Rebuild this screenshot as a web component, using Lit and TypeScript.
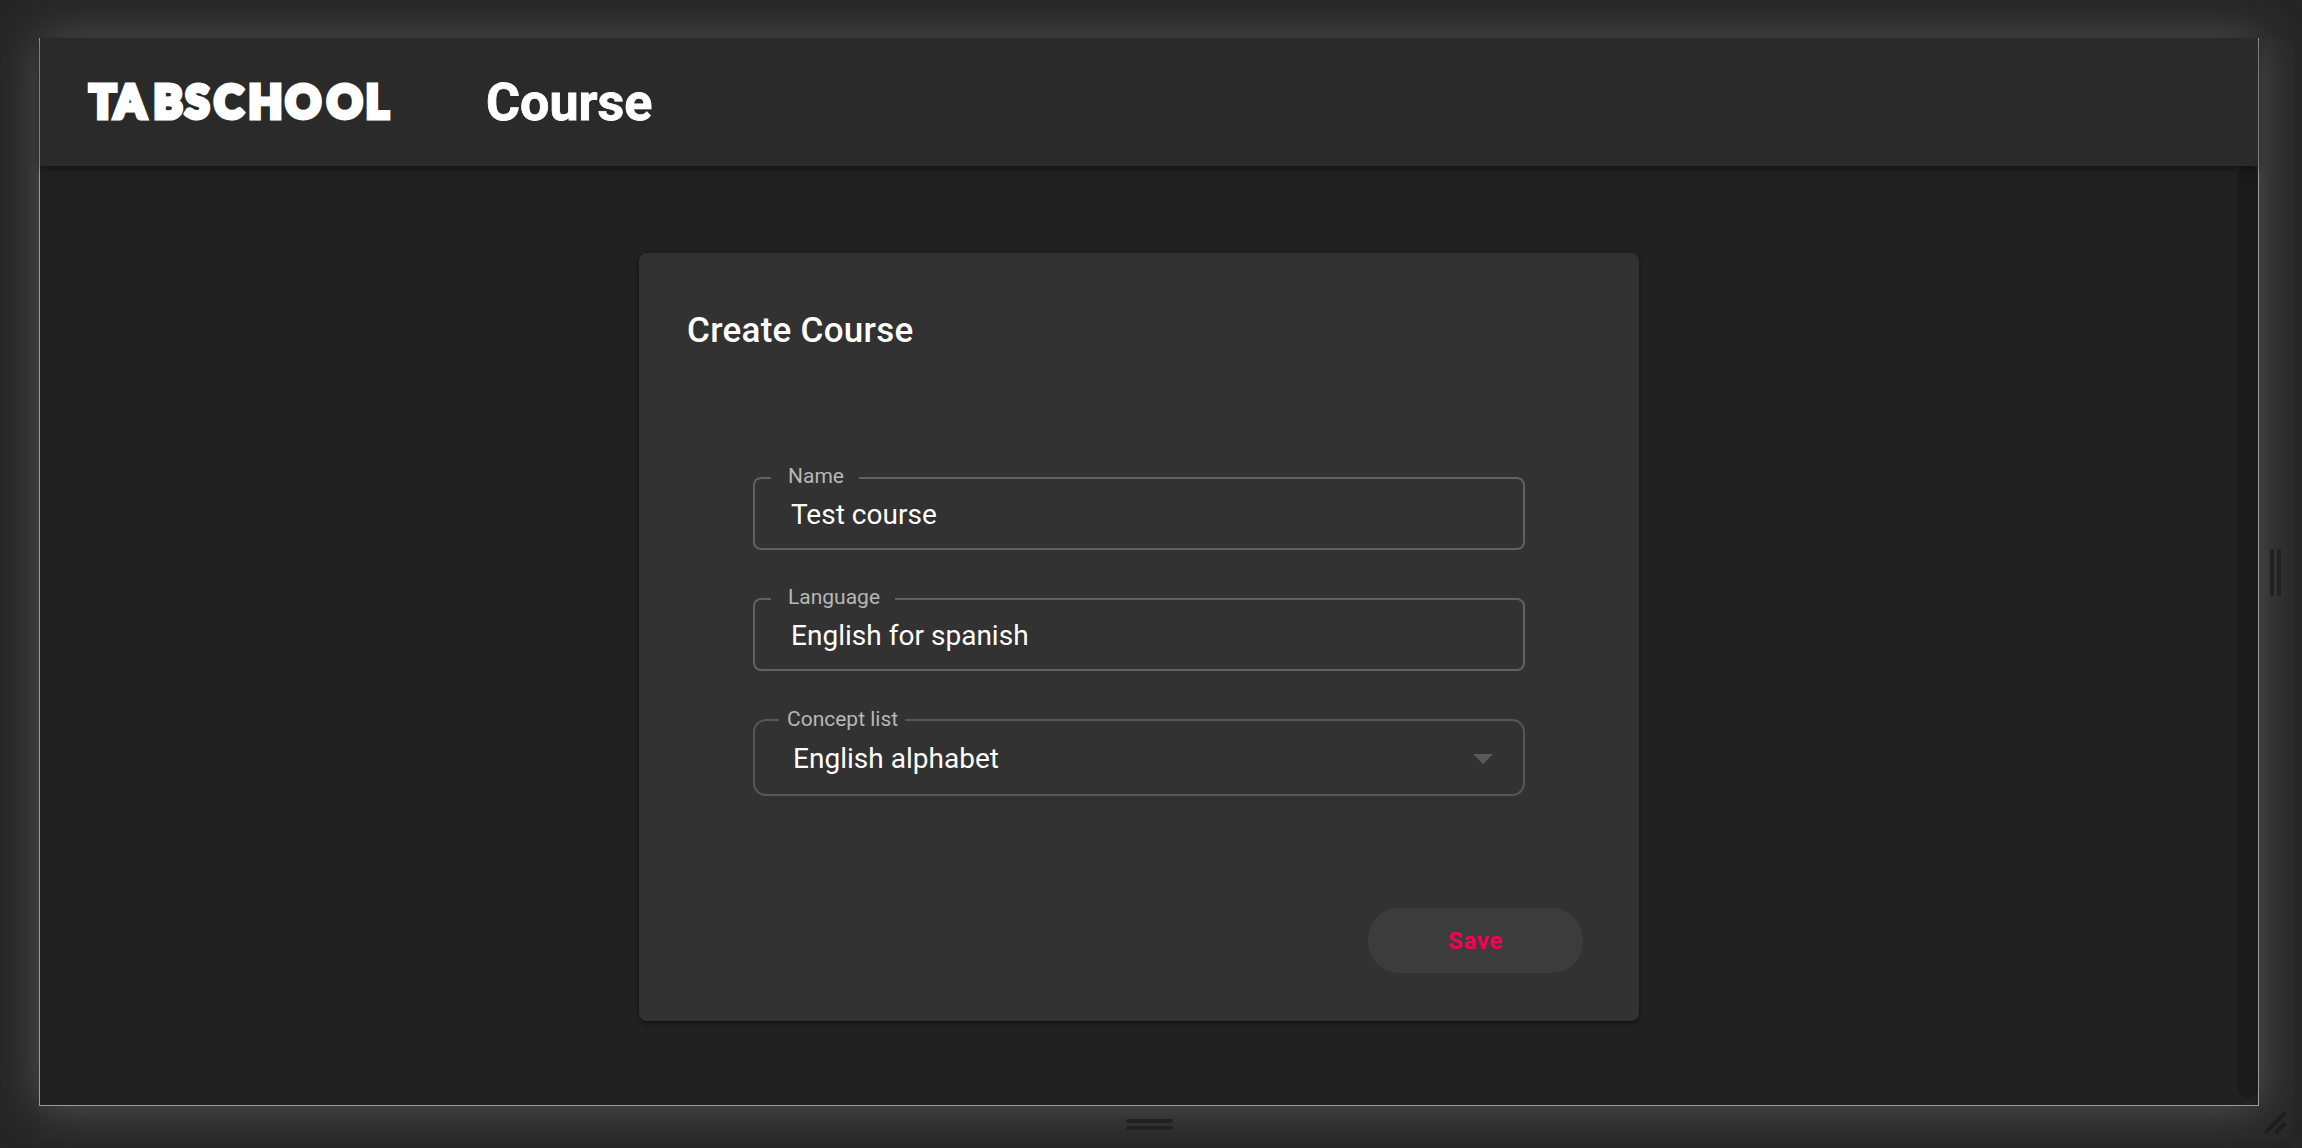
import { LitElement, html, css } from "lit";
import { customElement, property } from "lit/decorators.js";
import { classMap } from "lit/directives/class-map.js";

@customElement("outlined-field")
export class OutlinedField extends LitElement {
  @property() label = "";
  @property() value = "";
  @property({ type: Boolean }) select = false;

  static styles = css`
    :host { display: block; }
    .field { position: relative; height: 73px; display: flex; align-items: center; justify-content: space-between; box-sizing: border-box; padding: 2px 32px 0 38px; --line: #616161; --r: 8px; }
    .field.select { height: 77px; padding-left: 40px; --line: #575757; --r: 13px; }
    .outline { position: absolute; inset: 0; display: flex; }
    .lead, .notch, .trail { box-sizing: border-box; border: 2px solid var(--line); }
    .lead { width: 18px; border-right: 0; border-radius: var(--r) 0 0 var(--r); }
    .select .lead { width: 26px; }
    .notch { border-width: 0 0 2px; padding: 0 15px 0 17px; height: 100%; }
    .select .notch { padding: 0 7px 0 8px; }
    .trail { flex: 1; border-left: 0; border-radius: 0 var(--r) var(--r) 0; }
    .label { display: block; font-size: 21px; line-height: 24px; margin-top: -13px; letter-spacing: 0; color: #b7b7b7; white-space: nowrap; }
    .select .label { margin-top: -12px; }
    .value { font-size: 28px; line-height: 32px; letter-spacing: 0.02px; color: #fff; white-space: nowrap; }
    .arrow { width: 20px; height: 10px; fill: #5a5a5a; }
  `;

  render() {
    return html`<div class=${classMap({ field: true, select: this.select })}>
      <div class="outline">
        <div class="lead"></div>
        <div class="notch"><span class="label">${this.label}</span></div>
        <div class="trail"></div>
      </div>
      <span class="value">${this.value}</span>
      ${this.select ? html`<svg class="arrow" viewBox="0 0 20 10"><path d="M0 0H20L10 10Z"/></svg>` : null}
    </div>`;
  }
}

@customElement("app-root")
export class AppRoot extends LitElement {
  static styles = css`
    :host { display: block; height: 1148px; font-family: Roboto, "Liberation Sans", sans-serif; color: #fff; }
    .desk { position: relative; box-sizing: border-box; height: 1148px; padding: 38px 43px 42px 39px; background: #262626; overflow: hidden; }
    .window { position: relative; height: 1068px; box-sizing: border-box; border: 1px solid #9b9b9b; border-top: 0; background: #212121; display: flex; flex-direction: column; box-shadow: 0 0 42px #555; }
    .header { height: 128px; flex: none; background: #2a2a2a; display: flex; align-items: center; padding-left: 38px; box-shadow: 0 3px 8px rgba(0,0,0,.42); z-index: 1; }
    .logo { width: 330px; height: 80px; font-family: Lato, sans-serif; font-weight: 900; font-size: 46px; fill: #fff; stroke: #fff; stroke-width: 5px; stroke-miterlimit: 3; overflow: visible; }
    .title { margin: 1px 0 0 78px; font-size: 52px; line-height: 60px; font-weight: 700; -webkit-text-stroke: .8px #fff; }
    .body { flex: 1; display: flex; }
    .content { flex: 1; display: flex; justify-content: center; align-items: flex-start; padding-top: 87px; }
    .track { width: 20px; height: 932px; background: #1a1a1a; border-radius: 10px; }
    .card { width: 1000px; height: 768px; box-sizing: border-box; background: #323232; border-radius: 8px; padding: 57px 56px 48px 48px; box-shadow: 0 2px 4px rgba(0,0,0,.45); display: flex; flex-direction: column; }
    .heading { margin: 0; font-size: 35px; font-weight: 500; line-height: 42px; letter-spacing: .28px; }
    .form { margin: 125px 58px 0 66px; display: flex; flex-direction: column; gap: 48px; }
    .actions { margin-top: auto; display: flex; justify-content: flex-end; }
    .save { width: 215px; height: 65px; border: 0; border-radius: 31px; background: #3c3c3c; color: #f50057; font: 700 24px/65px Roboto, sans-serif; letter-spacing: .6px; padding: 1px 0 0; text-align: center; }
    .strip { position: absolute; box-sizing: border-box; background: rgba(255,255,255,.012); display: flex; align-items: center; justify-content: center; gap: 3px; }
    .right { left: 2259px; top: 39px; width: 35px; height: 1067px; padding-right: 2px; }
    .bottom { left: 40px; top: 1106px; width: 2219px; height: 35px; flex-direction: column; padding-top: 2px; }
    .corner { left: 2259px; top: 1106px; width: 35px; height: 35px; }
    .bar { background: #212121; border-radius: 2px; }
    .right .bar { width: 4px; height: 47px; }
    .bottom .bar { width: 47px; height: 4px; }
    .grip { width: 35px; height: 35px; stroke: #1c1c1c; stroke-width: 3.8px; stroke-linecap: round; }
  `;

  render() {
    return html`<div class="desk">
      <div class="window">
        <header class="header">
          <svg class="logo" viewBox="0 0 330 80"><text transform="translate(10 0) scale(.95 1)" x="1.6 28.2 69 102.3 133 169 208 251.5 292.3" y="56">TABSCHOOL</text></svg>
          <h1 class="title">Course</h1>
        </header>
        <div class="body">
          <main class="content">
            <section class="card">
              <h2 class="heading">Create Course</h2>
              <div class="form">
                <outlined-field label="Name" value="Test course"></outlined-field>
                <outlined-field label="Language" value="English for spanish"></outlined-field>
                <outlined-field select label="Concept list" value="English alphabet"></outlined-field>
              </div>
              <div class="actions"><button class="save">Save</button></div>
            </section>
          </main>
          <div class="track"></div>
        </div>
      </div>
      <div class="strip right"><i class="bar"></i><i class="bar"></i></div>
      <div class="strip bottom"><i class="bar"></i><i class="bar"></i></div>
      <div class="strip corner"><svg class="grip" viewBox="0 0 35 35"><path d="M7.5 25.5L25 8M18 25.5L25 18.5"/></svg></div>
    </div>`;
  }
}
